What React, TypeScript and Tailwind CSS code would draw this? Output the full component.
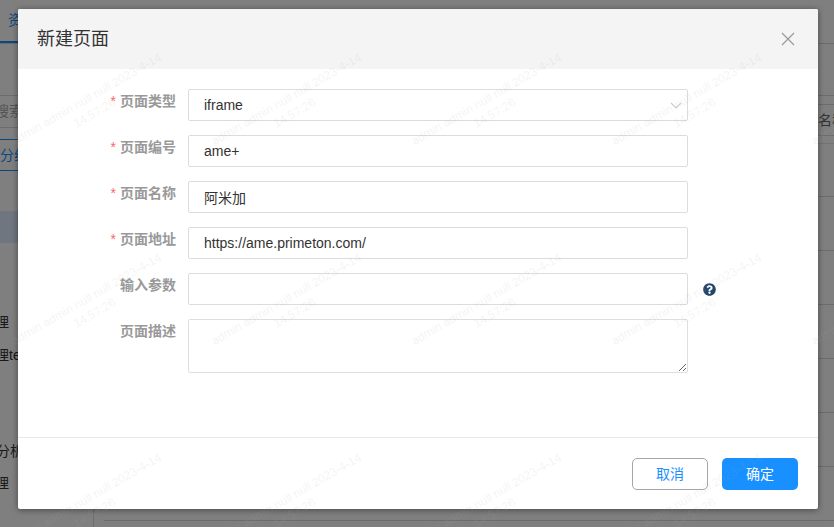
import { FaQuestionCircle } from 'react-icons/fa';

const fontStack = "font-['Liberation_Sans','Noto_Sans_CJK_SC',sans-serif]";

const watermarkCells = Array.from({ length: 24 }, (_, i) => i);
const tableRows = [0, 1, 2, 3, 4, 5, 6];

function Watermark() {
  return (
    <div className="pointer-events-none absolute left-[-210px] top-[-194px] z-30 grid grid-cols-[repeat(6,200px)] auto-rows-[200px]">
      {watermarkCells.map(i => (
        <div key={i} className="flex items-center justify-center">
          <div className="rotate-[-30deg] whitespace-nowrap text-center text-[12px] leading-[16px] text-[#aaaaaa]/15">
            <div>admin admin null null 2023-4-14</div>
            <div>14:57:26</div>
          </div>
        </div>
      ))}
    </div>
  );
}

// the page that sits dimmed behind the dialog
function BackgroundPage() {
  return (
    <div className="flex h-full flex-col text-[14px] text-[#333333]">
      <div className="h-[44px] flex-none border-b border-[#d9d9d9]">
        <div className="flex h-full w-[64px] items-center border-b-2 border-[#1890ff] pl-2 text-[#1890ff]">资源</div>
      </div>
      <div className="flex min-h-0 flex-1">
        <div className="w-[94px] flex-none border-r border-[#d9d9d9] pt-[51px]">
          <div className="-ml-[5px] flex h-[33px] items-center whitespace-nowrap border-y border-[#d9d9d9] text-[#aaaaaa]">
            <span>搜索</span>
          </div>
          <div className="mt-[11px] flex h-[32px] items-center border-y border-[#1890ff] text-[#1890ff]">分组</div>
          <div className="mt-[40px] h-[32px] bg-[#deecff]" />
          <div className="-ml-[19px] mt-[68px] flex flex-col gap-[11px] whitespace-nowrap leading-[22px]">
            <div className="h-[22px]">管理</div>
            <div className="h-[22px]">管理test</div>
          </div>
          <div className="mt-[74px] flex flex-col gap-[10px] whitespace-nowrap leading-[22px]">
            <div className="-ml-[4px] h-[22px]">分析</div>
            <div className="-ml-[19px] h-[22px]">管理</div>
          </div>
        </div>
        <div className="min-w-0 flex-1 pl-[10px] pt-[51px]">
          <div className="h-[9px] border-t border-[#d9d9d9]" />
          <div className="flex h-[32px] items-center whitespace-nowrap border-y border-[#d9d9d9] pl-[714px] text-[#666666]">名称</div>
          <div className="h-[8px] border-b border-[#e8e8e8]" />
          {tableRows.map(i => (
            <div key={i} className={i === 0 ? 'h-[53px] border-b border-[#d9d9d9]' : 'h-[54px] border-b border-[#d9d9d9]'} />
          ))}
        </div>
      </div>
    </div>
  );
}

interface FieldRowProps {
  label: string;
  required?: boolean;
  children: React.ReactNode;
}

function FieldRow({ label, required, children }: FieldRowProps) {
  return (
    <div className="flex items-start">
      <div className="flex w-[170px] flex-none justify-end pr-3 pt-[3px] text-[14px] font-bold leading-[18px] text-[#999999]">
        {required && <span className="mr-[4px] font-normal text-[#f56c6c]">*</span>}
        {label}
      </div>
      {children}
    </div>
  );
}

const inputClass =
  'h-[32px] w-[500px] rounded-[2px] border border-[#dcdcdc] bg-white px-[15px] text-[14px] text-[#333333] outline-none';

function NewPageDialog() {
  return (
    <div className="absolute left-[18px] top-[9px] z-20 flex h-[500px] w-[800px] flex-col overflow-hidden rounded-[2px] bg-white shadow-[0_1px_6px_rgba(0,0,0,0.45)]">
      <div className="flex h-[60px] flex-none items-center justify-between bg-[#f4f4f4] pl-[19px] pr-[23px]">
        <h2 className="text-[18px] font-normal text-[#333333]">新建页面</h2>
        <svg width="14" height="14" viewBox="0 0 14 14" fill="none" stroke="#9a9a9a" strokeWidth="1.2">
          <path d="M1 1l12 12M13 1L1 13" />
        </svg>
      </div>

      <div className="flex flex-1 flex-col gap-[14px] pt-5">
        <FieldRow label="页面类型" required>
          <div className="relative">
            <div className={`${inputClass} flex items-center`}>iframe</div>
            <svg className="absolute right-[6px] top-[13px]" width="12" height="7" viewBox="0 0 12 7" fill="none" stroke="#cccccc" strokeWidth="1.2">
              <path d="M1 1l5 5 5-5" />
            </svg>
          </div>
        </FieldRow>
        <FieldRow label="页面编号" required>
          <input className={inputClass} defaultValue="ame+" />
        </FieldRow>
        <FieldRow label="页面名称" required>
          <input className={inputClass} defaultValue="阿米加" />
        </FieldRow>
        <FieldRow label="页面地址" required>
          <input className={inputClass} defaultValue="https://ame.primeton.com/" />
        </FieldRow>
        <FieldRow label="输入参数">
          <input className={inputClass} />
          <FaQuestionCircle className="ml-[15px] mt-[10px] text-[#23446b]" size={13} />
        </FieldRow>
        <FieldRow label="页面描述">
          <textarea className="block h-[54px] w-[500px] rounded-[2px] border border-[#dcdfe6] bg-white outline-none" />
        </FieldRow>
      </div>

      <div className="flex h-[72px] flex-none items-start justify-end gap-[14px] border-t border-[#e8e8e8] pr-5 pt-5">
        <button className="h-[32px] w-[76px] rounded-[5px] border border-[#a6a6a6] bg-white text-[14px] text-[#1890ff]">取消</button>
        <button className="h-[32px] w-[76px] rounded-[5px] bg-[#1890ff] text-[14px] text-white">确定</button>
      </div>
    </div>
  );
}

export default function App() {
  return (
    <div className={`relative h-[527px] w-[834px] overflow-hidden bg-white ${fontStack}`}>
      <BackgroundPage />
      <div className="absolute inset-0 z-10 bg-black/50" />
      <NewPageDialog />
      <Watermark />
    </div>
  );
}
